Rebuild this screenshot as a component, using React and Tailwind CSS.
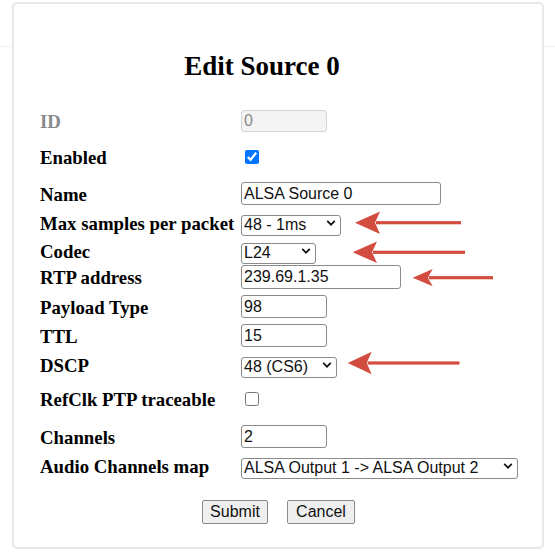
import React from "react";

const serif = { fontFamily: '"Liberation Serif", "Times New Roman", serif' };
const sans = { fontFamily: '"Liberation Sans", Arial, sans-serif' };

const Chevron = () => (
  <svg
    className="pointer-events-none absolute right-[5px] top-1/2 -translate-y-1/2"
    width="10"
    height="7"
    viewBox="0 0 10 7"
    fill="none"
  >
    <path d="M1.2 1.4 L5 5.2 L8.8 1.4" stroke="#111" strokeWidth="1.7" />
  </svg>
);

const TextInput = ({ value, w, h, disabled }) => (
  <input
    type="text"
    defaultValue={value}
    disabled={disabled}
    style={{ ...sans, width: w, height: h }}
    className={`rounded-[3px] border px-[2px] text-[16px] leading-none outline-none ${
      disabled
        ? "border-[#d4d4d4] bg-[#f4f4f4] text-[#8c8c8c]"
        : "border-[#8a8a8a] bg-white text-[#111]"
    }`}
  />
);

const Select = ({ value, options, w, h }) => (
  <div className="relative" style={{ width: w, height: h }}>
    <select
      defaultValue={value}
      style={sans}
      className="h-full w-full appearance-none rounded-[3px] border border-[#8a8a8a] bg-white pl-[2px] text-[16px] leading-none text-[#111] outline-none"
    >
      {options.map((o) => (
        <option key={o}>{o}</option>
      ))}
    </select>
    <Chevron />
  </div>
);

const Check = ({ checked }) => (
  <input
    type="checkbox"
    defaultChecked={checked}
    className="ml-[4px] h-[14px] w-[14px] accent-[#0075ff]"
  />
);

const rows = [
  { label: "ID", mt: 28, h: 22, muted: true, control: <TextInput value="0" w={86} h={22} disabled /> },
  { label: "Enabled", mt: 18, h: 14, control: <Check checked /> },
  { label: "Name", mt: 18, h: 23, control: <TextInput value="ALSA Source 0" w={200} h={23} /> },
  {
    label: "Max samples per packet",
    mt: 7,
    h: 21,
    control: <Select value="48 - 1ms" options={["6 - 125us", "12 - 250us", "48 - 1ms", "96 - 2ms"]} w={100} h={21} />,
  },
  { label: "Codec", mt: 7, h: 21, control: <Select value="L24" options={["L16", "L24", "AM824"]} w={75} h={21} /> },
  { label: "RTP address", mt: 4, h: 24, control: <TextInput value="239.69.1.35" w={160} h={24} /> },
  { label: "Payload Type", mt: 6, h: 23, control: <TextInput value="98" w={86} h={23} /> },
  { label: "TTL", mt: 6, h: 23, control: <TextInput value="15" w={86} h={23} /> },
  {
    label: "DSCP",
    mt: 7,
    h: 21,
    control: <Select value="48 (CS6)" options={["46 (EF)", "48 (CS6)", "34 (AF41)", "0 (BE)"]} w={96} h={21} />,
  },
  { label: "RefClk PTP traceable", mt: 17, h: 14, control: <Check /> },
  { label: "Channels", mt: 19, h: 23, control: <TextInput value="2" w={86} h={23} /> },
  {
    label: "Audio Channels map",
    mt: 7,
    h: 21,
    control: (
      <Select
        value="ALSA Output 1 -> ALSA Output 2"
        options={["ALSA Output 1 -> ALSA Output 2", "ALSA Output 3 -> ALSA Output 4"]}
        w={277}
        h={21}
      />
    ),
  },
];

const arrows = [
  { tip: 355, y: 222.7, back: 380, half: 11.2, tail: 461 },
  { tip: 352.7, y: 252.3, back: 377, half: 10.7, tail: 465 },
  { tip: 412.7, y: 277.7, back: 432.7, half: 8.6, tail: 493 },
  { tip: 347.7, y: 363, back: 371.7, half: 11.2, tail: 459.5 },
];

export default function App() {
  return (
    <div className="relative h-[553px] w-[555px] overflow-hidden bg-white">
      {/* page header behind the dialog */}
      <div className="h-[47px] border-b border-[#f1f1f1]" />

      {/* dialog */}
      <div className="absolute left-[12px] top-[2px] flex h-[547px] w-[532px] flex-col rounded-[5px] border-2 border-[#e7e7e7] bg-white">
        <h2
          style={serif}
          className="mt-[46px] pr-[32px] text-center text-[27px] font-bold leading-[32px] text-black"
        >
          Edit Source 0
        </h2>

        <div className="flex flex-col pl-[26px]">
          {rows.map((r) => (
            <div
              key={r.label}
              className="flex items-center"
              style={{ marginTop: r.mt, height: r.h }}
            >
              <span
                style={serif}
                className={`w-[201px] shrink-0 whitespace-nowrap pt-[3px] text-[18.8px] font-bold leading-none ${
                  r.muted ? "text-[#8a8a8a]" : "text-black"
                }`}
              >
                {r.label}
              </span>
              {r.control}
            </div>
          ))}
        </div>

        <div className="mt-[24px] flex h-[24px] pl-[188px]" style={sans}>
          <button className="h-[24px] w-[66px] rounded-[2px] border border-[#8a8a8a] bg-[#efefef] text-[16px] leading-none text-[#111]">
            Submit
          </button>
          <button className="ml-[19px] h-[24px] w-[68px] rounded-[2px] border border-[#8a8a8a] bg-[#efefef] text-[16px] leading-none text-[#111]">
            Cancel
          </button>
        </div>
      </div>

      {/* annotation arrows */}
      <svg
        className="pointer-events-none absolute left-0 top-0"
        width="555"
        height="553"
        viewBox="0 0 555 553"
      >
        {arrows.map((a, i) => (
          <g key={i} fill="#d24c3f" stroke="none">
            <rect x={a.back - 4} y={a.y - 1.6} width={a.tail - a.back + 4} height={3.2} />
            <polygon
              points={`${a.tip},${a.y} ${a.back},${a.y - a.half} ${a.back - 5},${a.y} ${a.back},${a.y + a.half}`}
            />
          </g>
        ))}
      </svg>
    </div>
  );
}
